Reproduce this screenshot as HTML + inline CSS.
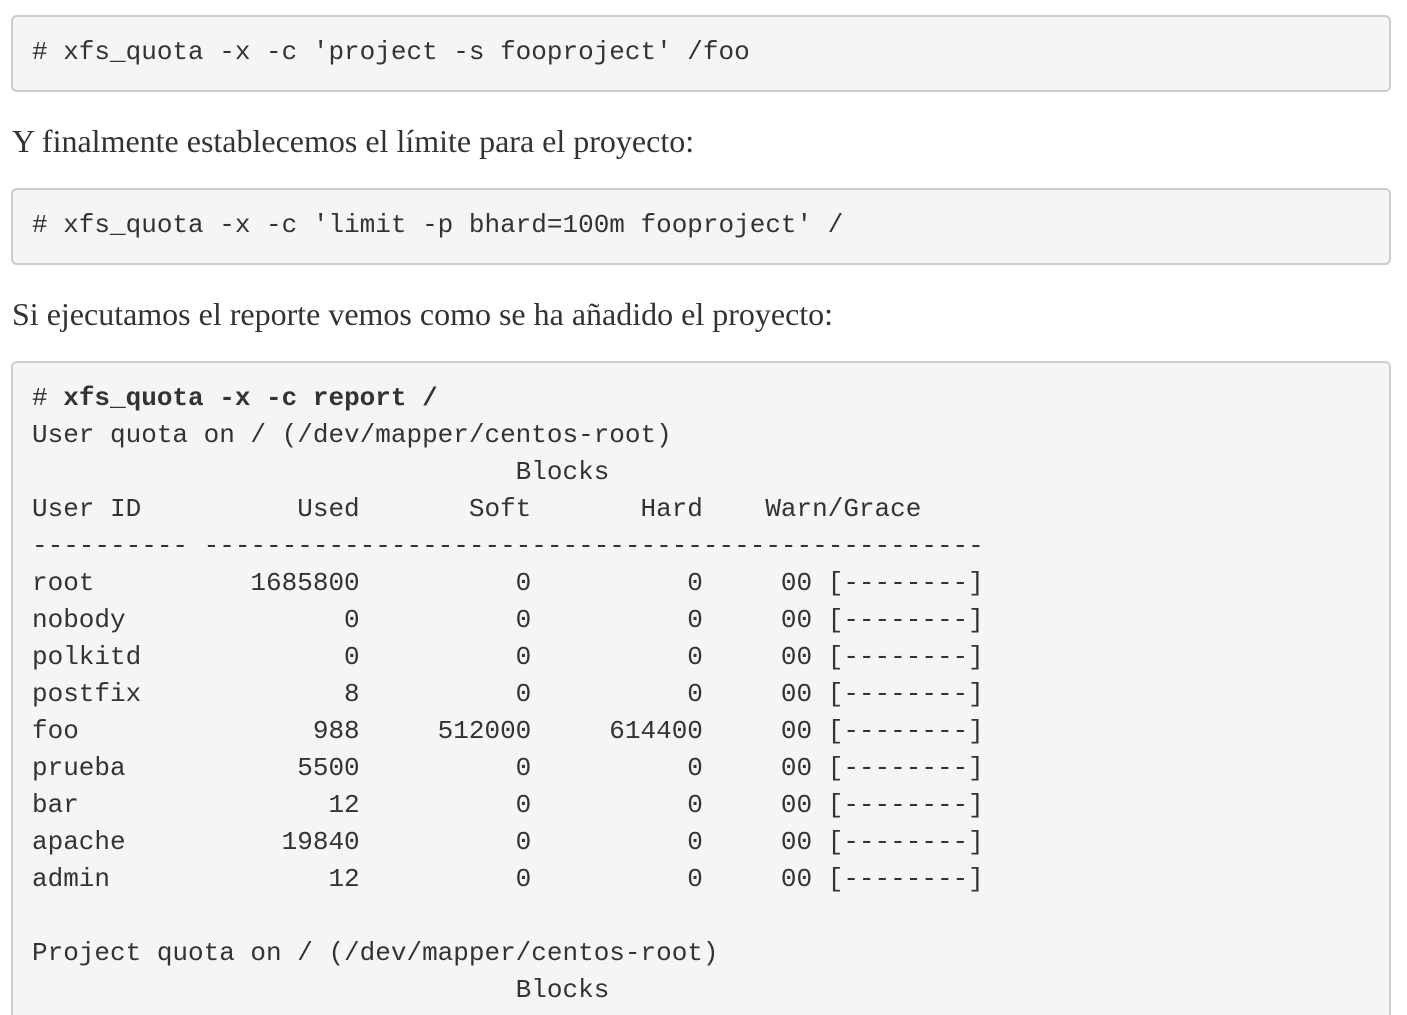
<!DOCTYPE html>
<html><head><meta charset="utf-8"><style>
html,body{margin:0;padding:0;background:#fff;}
#w{position:relative;width:1407px;height:1015px;overflow:hidden;}
.box{position:absolute;left:11px;width:1338px;border:2px solid #ccc;border-radius:6px;background:#f5f5f5;padding:17px 19px;}
pre{margin:0;font-family:"Liberation Mono",monospace;font-size:26px;line-height:37px;color:#333;}
.p{position:absolute;left:12px;font-family:"Liberation Serif",serif;font-size:32px;line-height:40px;color:#333;margin:0;white-space:nowrap;}
</style></head><body><div id="w">
<div class="box" style="top:15px;height:39px"><pre># xfs_quota -x -c 'project -s fooproject' /foo</pre></div>
<p class="p" style="top:121px">Y finalmente establecemos el límite para el proyecto:</p>
<div class="box" style="top:188px;height:39px"><pre># xfs_quota -x -c 'limit -p bhard=100m fooproject' /</pre></div>
<p class="p" style="top:294px">Si ejecutamos el reporte vemos como se ha añadido el proyecto:</p>
<div class="box" style="top:361px;height:700px"><pre># <b>xfs_quota -x -c report /</b>
User quota on / (/dev/mapper/centos-root)
                               Blocks
User ID          Used       Soft       Hard    Warn/Grace
---------- --------------------------------------------------
root          1685800          0          0     00 [--------]
nobody              0          0          0     00 [--------]
polkitd             0          0          0     00 [--------]
postfix             8          0          0     00 [--------]
foo               988     512000     614400     00 [--------]
prueba           5500          0          0     00 [--------]
bar                12          0          0     00 [--------]
apache          19840          0          0     00 [--------]
admin              12          0          0     00 [--------]

Project quota on / (/dev/mapper/centos-root)
                               Blocks</pre></div>
</div></body></html>
